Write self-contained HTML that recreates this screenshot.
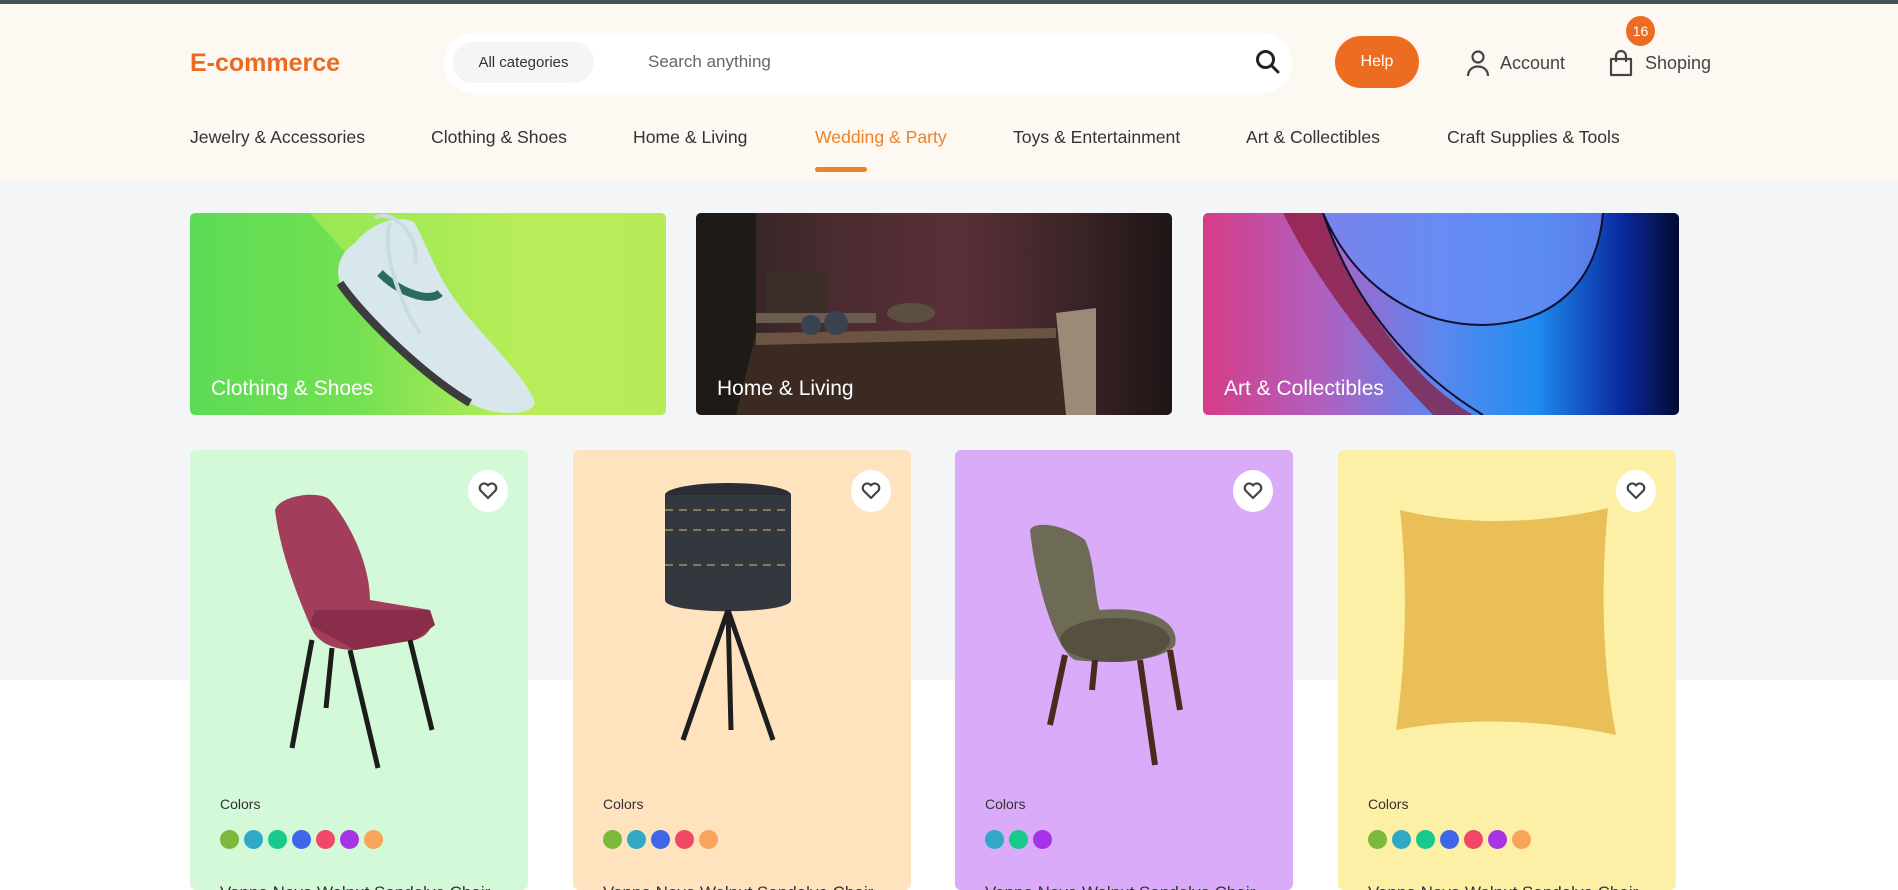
<!DOCTYPE html>
<html><head><meta charset="utf-8"><style>
*{margin:0;padding:0;box-sizing:border-box}
body{width:1898px;height:882px;overflow:hidden;font-family:"Liberation Sans",sans-serif;background:#fff;position:relative}
.abs{position:absolute}
.topline{left:0;top:0;width:1898px;height:4px;background:#45525c}
.header{left:0;top:4px;width:1898px;height:178px;background:#fef8f2}
.gray{left:0;top:182px;width:1898px;height:498px;background:#f4f5f7}
.logo{left:190px;top:49px;font-size:25px;font-weight:bold;color:#e86b23}
.search{left:444px;top:33px;width:848px;height:60px;background:#fff;border-radius:30px}
.cat{left:453px;top:42px;width:141px;height:41px;background:#f4f5f7;border-radius:20px;font-size:15px;color:#333;text-align:center;line-height:41px}
.stext{left:648px;top:52px;font-size:17px;color:#666}
.help{left:1335px;top:36px;width:84px;height:52px;background:#ec6d21;border-radius:26px;color:#fff;font-size:16px;text-align:center;line-height:52px}
.lnk{font-size:18px;color:#444}
.badge{left:1626px;top:16px;width:29px;height:30px;border-radius:50%;background:#ec6d21;color:#fff;font-size:14px;text-align:center;line-height:30px}
.nav{top:127px;font-size:17.6px;color:#333}
.ul{left:815px;top:167px;width:52px;height:5px;border-radius:3px;background:#ed8226}
.ban{top:213px;width:476px;height:202px;border-radius:5px;overflow:hidden}
.ban span{position:absolute;left:21px;bottom:14px;color:#fff;font-size:21px}
.card{top:450px;width:338px;height:440px;border-radius:6px;overflow:hidden}
.heart{position:absolute;right:20px;top:20px;width:40px;height:42px;border-radius:50%;background:#fff;display:flex;align-items:center;justify-content:center}
.colors{position:absolute;left:30px;top:346px;font-size:14px;color:#333}
.dots{position:absolute;left:30px;top:380px;display:flex;gap:5px}
.dots i{width:19px;height:19px;border-radius:50%;display:block}
.title{position:absolute;left:30px;top:433px;font-size:17px;color:#333;white-space:nowrap}
</style></head><body>
<div class="abs topline"></div>
<div class="abs header"></div>
<div class="abs gray"></div>
<div class="abs logo">E-commerce</div>
<div class="abs search"></div>
<div class="abs cat">All categories</div>
<div class="abs stext">Search anything</div>
<svg class="abs" style="left:1254px;top:48px" width="28" height="28" viewBox="0 0 28 28"><circle cx="11.5" cy="11.5" r="8" fill="none" stroke="#222" stroke-width="3"/><line x1="17.5" y1="17.5" x2="24" y2="24" stroke="#222" stroke-width="3" stroke-linecap="round"/></svg>
<div class="abs help">Help</div>
<svg class="abs" style="left:1465px;top:49px" width="26" height="28" viewBox="0 0 26 28"><circle cx="13" cy="8" r="5.5" fill="none" stroke="#444" stroke-width="2.2"/><path d="M3 27c0-6 4.5-9.5 10-9.5s10 3.5 10 9.5" fill="none" stroke="#444" stroke-width="2.2"/></svg>
<div class="abs lnk" style="left:1500px;top:53px">Account</div>
<svg class="abs" style="left:1607px;top:49px" width="28" height="28" viewBox="0 0 28 28"><path d="M4 10h20v16H4z" fill="none" stroke="#444" stroke-width="2.2" stroke-linejoin="round"/><path d="M9 13V7a5 5 0 0 1 10 0v6" fill="none" stroke="#444" stroke-width="2.2"/></svg>
<div class="abs lnk" style="left:1645px;top:53px">Shoping</div>
<div class="abs badge">16</div>
<div class="abs nav" style="left:190px">Jewelry &amp; Accessories</div>
<div class="abs nav" style="left:431px">Clothing &amp; Shoes</div>
<div class="abs nav" style="left:633px">Home &amp; Living</div>
<div class="abs nav" style="left:815px;color:#ed8226">Wedding &amp; Party</div>
<div class="abs nav" style="left:1013px">Toys &amp; Entertainment</div>
<div class="abs nav" style="left:1246px">Art &amp; Collectibles</div>
<div class="abs nav" style="left:1447px">Craft Supplies &amp; Tools</div>
<div class="abs ul"></div>

<div class="abs ban" style="left:190px;background:linear-gradient(90deg,#5cdc55 0%,#74e052 35%,#b8ee5a 70%,#b5ec5a 100%)">
<svg width="476" height="202" style="position:absolute;left:0;top:0"><path d="M120 0 L476 0 L476 202 L300 202 Z" fill="#b7ec58" opacity=".6"/>
<path d="M165 30 C180 10 210 0 225 10 C240 40 250 70 275 100 C300 130 340 170 345 190 C340 205 300 202 280 190 C230 160 170 100 150 70 C145 55 150 40 165 30Z" fill="#d7e7ec"/>
<path d="M150 70 C170 100 230 160 280 190" stroke="#3c3c3c" stroke-width="8" fill="none"/>
<path d="M190 60 C210 80 240 90 250 80" stroke="#2c6a5c" stroke-width="8" fill="none"/>
<path d="M185 5 C200 -5 230 20 225 50 M200 10 C190 40 215 100 230 120" stroke="#c9dce6" stroke-width="4" fill="none"/></svg>
<span>Clothing &amp; Shoes</span></div>

<div class="abs ban" style="left:696px;background:linear-gradient(90deg,#2b2221 0%,#4a2b30 30%,#5a3038 55%,#3a2426 80%,#1e1516 100%)">
<svg width="476" height="202" style="position:absolute;left:0;top:0"><rect x="0" y="0" width="60" height="202" fill="#1d1a18"/><rect x="60" y="100" width="120" height="10" fill="#6a5c50"/><rect x="70" y="60" width="60" height="40" fill="#3a2e28"/>
<path d="M60 120 L360 115 L380 202 L40 202Z" fill="#3a2a22"/><path d="M60 120 L360 115 L360 125 L60 132Z" fill="#6b5442"/>
<circle cx="115" cy="112" r="10" fill="#3a4450"/><circle cx="140" cy="110" r="12" fill="#3a4450"/><ellipse cx="215" cy="100" rx="24" ry="10" fill="#5b5040"/>
<path d="M360 100 L400 95 L400 202 L370 202Z" fill="#9a8a78"/></svg>
<span>Home &amp; Living</span></div>

<div class="abs ban" style="left:1203px;background:linear-gradient(90deg,#d63c86 0%,#b060c0 25%,#5a88f0 50%,#1f8cf0 70%,#0a2aa0 88%,#020a30 100%)">
<svg width="476" height="202" style="position:absolute;left:0;top:0"><path d="M80 0 L120 0 C150 80 200 160 270 202 L230 202 C180 150 120 80 80 0Z" fill="#8a1530" opacity=".7"/>
<path d="M120 0 L400 0 C395 60 360 110 280 112 C210 112 150 70 120 0Z" fill="#6c8cf5" opacity=".8"/><path d="M120 0 C150 70 210 112 280 112 C360 110 395 60 400 0" stroke="#101030" stroke-width="2" fill="none"/>
<path d="M120 0 C150 90 210 160 280 202" stroke="#101030" stroke-width="2" fill="none"/></svg>
<span>Art &amp; Collectibles</span></div>

<div class="abs card" style="left:190px;background:#d3f9d8">
<div class="heart"><svg width="20" height="18" viewBox="0 0 20 18"><path d="M10 16 L2.5 8.5 A4.3 4.3 0 0 1 10 3.5 A4.3 4.3 0 0 1 17.5 8.5Z" fill="none" stroke="#444" stroke-width="2.2" stroke-linejoin="round"/></svg></div>
<svg width="338" height="330" style="position:absolute;left:0;top:0"><path d="M85 60 C90 45 130 40 140 50 C165 80 180 120 180 150 L240 160 C245 175 240 185 225 190 L165 200 C140 200 125 190 120 175 C105 140 90 100 85 60Z" fill="#a23d5c"/><path d="M120 175 L125 160 L240 160 L245 175 L225 190 L165 200Z" fill="#8a2d4a"/>
<path d="M122 190 L102 298 M160 200 L188 318 M142 198 L136 258 M220 190 L242 280" stroke="#1c1c1c" stroke-width="5"/></svg>
<div class="colors">Colors</div>
<div class="dots"><i style="background:#7cb83c"></i><i style="background:#30a9c6"></i><i style="background:#17c98a"></i><i style="background:#3f66e8"></i><i style="background:#f24868"></i><i style="background:#a633e6"></i><i style="background:#f7a55a"></i></div>
<div class="title">Vanna Nova Walnut Sandalye Chair</div></div>

<div class="abs card" style="left:573px;background:#ffe3bf">
<div class="heart"><svg width="20" height="18" viewBox="0 0 20 18"><path d="M10 16 L2.5 8.5 A4.3 4.3 0 0 1 10 3.5 A4.3 4.3 0 0 1 17.5 8.5Z" fill="none" stroke="#444" stroke-width="2.2" stroke-linejoin="round"/></svg></div>
<svg width="338" height="330" style="position:absolute;left:0;top:0"><ellipse cx="155" cy="45" rx="63" ry="12" fill="#2a2d33"/><path d="M92 45 L92 150 C92 165 218 165 218 150 L218 45Z" fill="#33373e"/><path d="M92 80 H218 M92 115 H218 M92 60 H218" stroke="#a88b5a" stroke-width="1.5" stroke-dasharray="8 6"/>
<path d="M155 160 L110 290 M155 160 L200 290 M155 160 L158 280" stroke="#1e1e1e" stroke-width="5"/></svg>
<div class="colors">Colors</div>
<div class="dots"><i style="background:#7cb83c"></i><i style="background:#30a9c6"></i><i style="background:#3f66e8"></i><i style="background:#f24868"></i><i style="background:#f7a55a"></i></div>
<div class="title">Vanna Nova Walnut Sandalye Chair</div></div>

<div class="abs card" style="left:955px;background:#d9abf9">
<div class="heart"><svg width="20" height="18" viewBox="0 0 20 18"><path d="M10 16 L2.5 8.5 A4.3 4.3 0 0 1 10 3.5 A4.3 4.3 0 0 1 17.5 8.5Z" fill="none" stroke="#444" stroke-width="2.2" stroke-linejoin="round"/></svg></div>
<svg width="338" height="330" style="position:absolute;left:0;top:0"><path d="M75 80 C80 70 110 75 130 90 C140 110 140 150 145 160 C200 155 225 175 220 195 C210 210 160 215 120 210 C100 200 80 130 75 80Z" fill="#6d6a55"/><ellipse cx="160" cy="190" rx="55" ry="22" fill="#55503f"/>
<path d="M110 205 L95 275 M185 210 L200 315 M215 200 L225 260 M140 210 L137 240" stroke="#4a2a1e" stroke-width="6"/></svg>
<div class="colors">Colors</div>
<div class="dots"><i style="background:#30a9c6"></i><i style="background:#17c98a"></i><i style="background:#a633e6"></i></div>
<div class="title">Vanna Nova Walnut Sandalye Chair</div></div>

<div class="abs card" style="left:1338px;background:#fcefa6">
<div class="heart"><svg width="20" height="18" viewBox="0 0 20 18"><path d="M10 16 L2.5 8.5 A4.3 4.3 0 0 1 10 3.5 A4.3 4.3 0 0 1 17.5 8.5Z" fill="none" stroke="#444" stroke-width="2.2" stroke-linejoin="round"/></svg></div>
<svg width="338" height="330" style="position:absolute;left:0;top:0"><path d="M62 60 C120 75 200 75 270 58 C262 140 265 220 278 285 C200 268 120 268 58 280 C68 210 70 130 62 60Z" fill="#eabf58"/></svg>
<div class="colors">Colors</div>
<div class="dots"><i style="background:#7cb83c"></i><i style="background:#30a9c6"></i><i style="background:#17c98a"></i><i style="background:#3f66e8"></i><i style="background:#f24868"></i><i style="background:#a633e6"></i><i style="background:#f7a55a"></i></div>
<div class="title">Vanna Nova Walnut Sandalye Chair</div></div>
</body></html>
